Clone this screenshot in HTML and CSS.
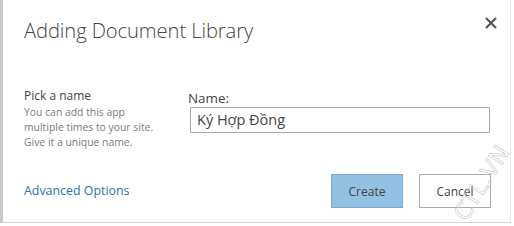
FILE: index.html
```html
<!DOCTYPE html>
<html>
<head>
<meta charset="utf-8">
<link rel="stylesheet" href="styles.css">
</head>
<body>
<div class="dialog">
  <div class="header">
    <h1 class="title">Adding Document Library</h1>
    <span class="close">
      <svg width="12" height="12" viewBox="0 0 12 12"><path d="M1 1L11 11M11 1L1 11" stroke="#555" stroke-width="2.2"/></svg>
    </span>
  </div>
  <div class="body">
    <div class="help">
      <div class="help-title">Pick a name</div>
      <div class="help-text">You can add this app<br>multiple times to your site.<br>Give it a unique name.</div>
    </div>
    <div class="field">
      <label class="label">Name:</label>
      <div class="input">Ký Hợp Đồng</div>
    </div>
  </div>
  <div class="footer">
    <a class="adv">Advanced Options</a>
    <div class="buttons">
      <span class="btn primary">Create</span>
      <span class="btn">Cancel</span>
    </div>
  </div>
  <div class="watermark">CTL.VN</div>
</div>
</body>
</html>
```
FILE: styles.css
```css
html, body { margin: 0; padding: 0; background: #fff; }
body { width: 514px; height: 226px; overflow: hidden; font-family: "Open Sans", "Noto Sans", sans-serif; }
.dialog {
  position: relative;
  box-sizing: border-box;
  width: 511px;
  height: 223px;
  border-left: 3px solid #c8c8c8;
  border-bottom: 1px solid #d4d4d4;
  border-right: 1px solid #ececec;
  background: #fff;
  padding: 0 0 0 21px;
}
.header { display: flex; justify-content: space-between; align-items: flex-start; height: 76px; }
.title {
  margin: 16px 0 0 0;
  font-weight: 300;
  font-size: 20.2px;
  color: #444;
  letter-spacing: -0.1px;
}
.close { margin: 17px 13px 0 0; display: block; }
.close svg { display: block; }
.body { display: flex; height: 82px; }
.help { width: 164px; padding-top: 12px; }
.help-title { font-size: 12px; color: #444; line-height: 16px; }
.help-text { font-size: 10.4px; color: #7a7a7a; line-height: 15px; margin-top: 1px; }
.field { padding-top: 14px; }
.label { display: block; font-size: 13.4px; color: #444; line-height: 17px; }
.input {
  box-sizing: border-box;
  width: 300px;
  height: 26px;
  margin-left: 2px;
  border: 1px solid #ababab;
  font-size: 14.5px;
  color: #444;
  line-height: 24px;
  padding-left: 6px;
}
.footer { display: flex; justify-content: space-between; align-items: flex-start; padding-top: 16px; }
.adv { font-size: 12.4px; color: #2a72ab; margin-top: 8px; }
.buttons { display: flex; gap: 16px; margin-right: 19px; }
.btn {
  box-sizing: border-box;
  width: 72px;
  height: 34px;
  border: 1px solid #ababab;
  background: #fff;
  font-size: 12px;
  color: #444;
  display: flex;
  align-items: center;
  justify-content: center;
}
.btn.primary { background: #93c1e3; border-color: #7ba9d2; }
.watermark {
  position: absolute;
  left: 437px;
  top: 170px;
  font-size: 23px;
  font-family: "DejaVu Sans", sans-serif;
  color: transparent;
  -webkit-text-stroke: 0.6px #c8c8c8;
  transform: rotate(-58deg);
}
```
